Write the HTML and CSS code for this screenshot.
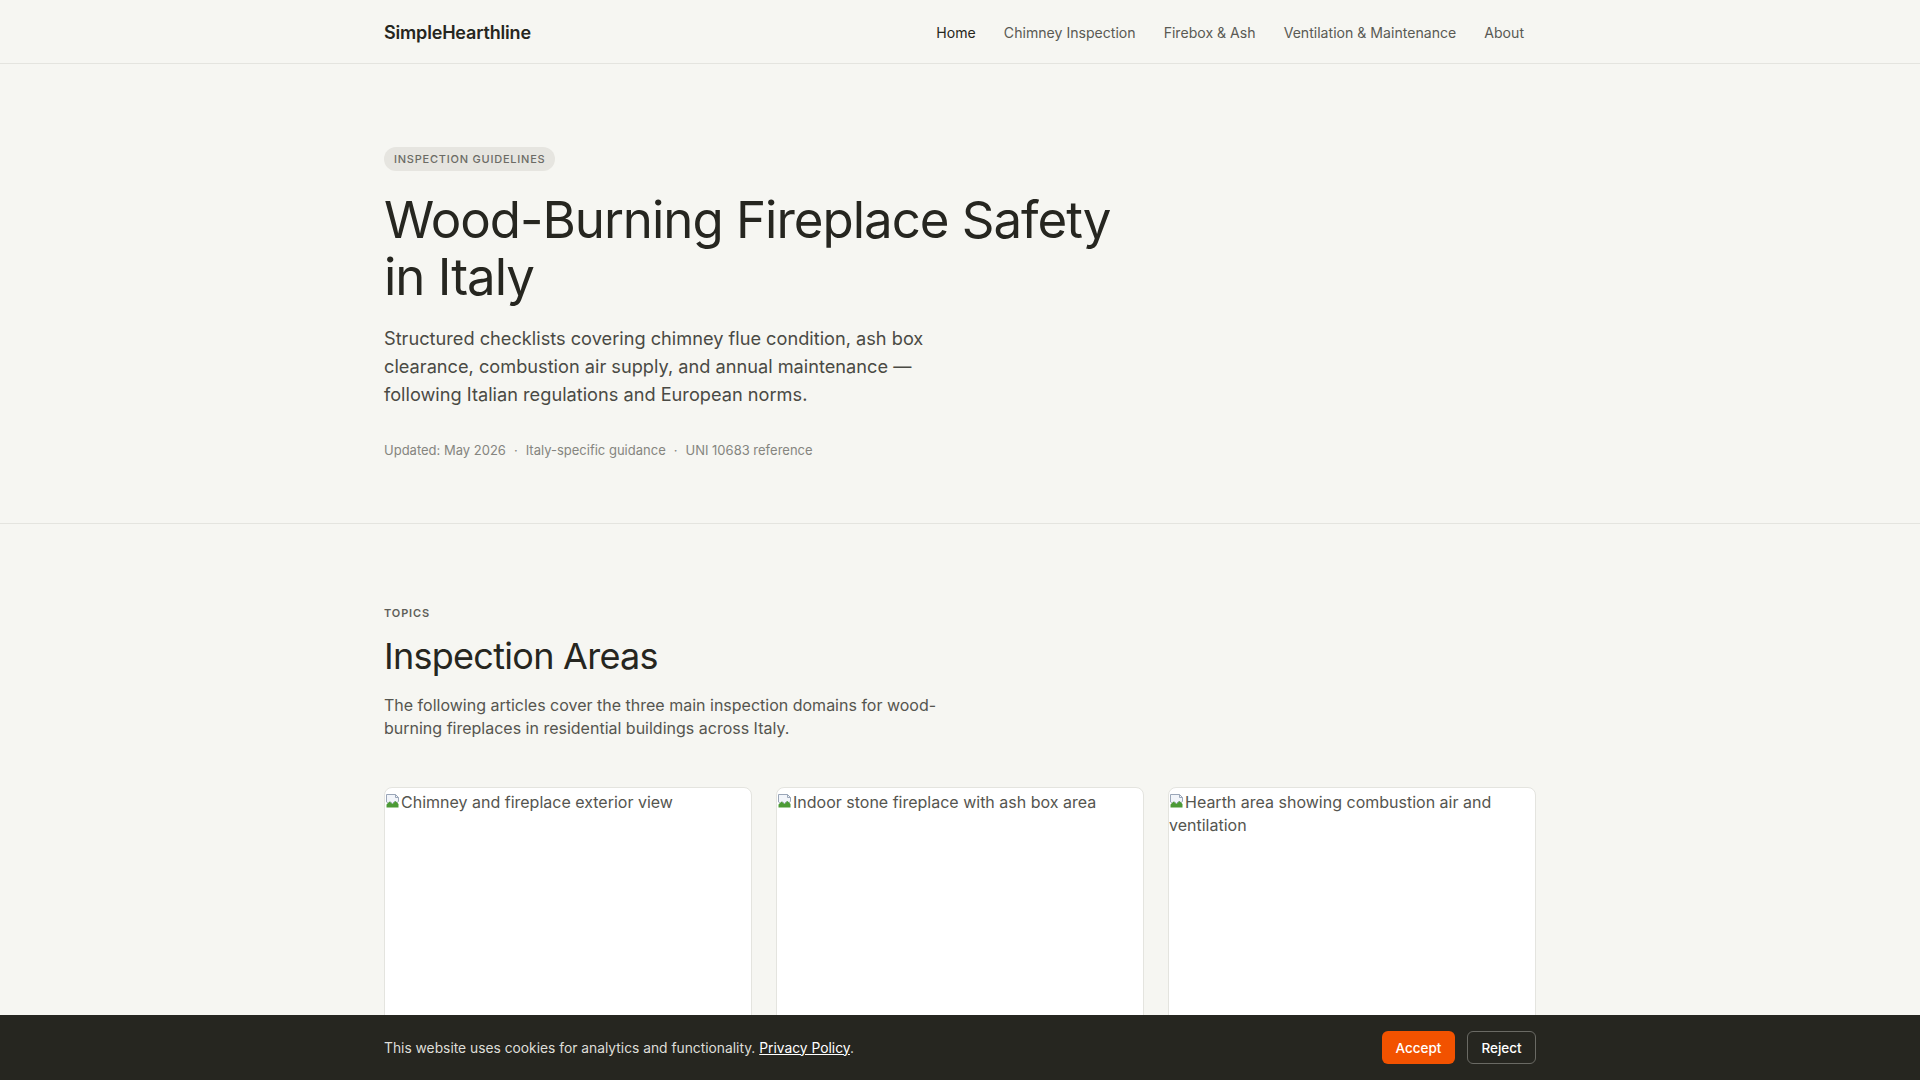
FILE: index.html
```html
<!DOCTYPE html>
<html lang="en">
<head>
  <meta charset="UTF-8">
  <title>SimpleHearthline — Wood-Burning Fireplace Safety in Italy</title>
  <link rel="stylesheet" href="styles.css">
</head>
<body>

  <header class="site-header">
    <div class="container header-inner">
      <a class="logo" href="#">SimpleHearthline</a>
      <nav class="nav">
        <a href="#" class="active">Home</a>
        <a href="#">Chimney Inspection</a>
        <a href="#">Firebox &amp; Ash</a>
        <a href="#">Ventilation &amp; Maintenance</a>
        <a href="#">About</a>
      </nav>
    </div>
  </header>

  <section class="hero">
    <div class="container">
      <span class="badge">Inspection Guidelines</span>
      <h1>Wood-Burning Fireplace Safety in Italy</h1>
      <p class="lead">Structured checklists covering chimney flue condition, ash box clearance, combustion air supply, and annual maintenance — following Italian regulations and European norms.</p>
      <div class="meta">
        <span>Updated: May 2026</span>
        <span class="dot">·</span>
        <span>Italy-specific guidance</span>
        <span class="dot">·</span>
        <span>UNI 10683 reference</span>
      </div>
    </div>
  </section>

  <section class="topics">
    <div class="container">
      <div class="eyebrow">Topics</div>
      <h2>Inspection Areas</h2>
      <p class="intro">The following articles cover the three main inspection domains for wood-burning fireplaces in residential buildings across Italy.</p>

      <div class="cards">
        <article class="card">
          <div class="card-img">
            <svg class="broken" viewBox="0 0 16 16" width="16" height="16"><path d="M1.5 1.5h9l3 3v4l-2 1.5-2-1.5-2 2-2-1.5-2 1.5-2-1.5z" fill="#f2f5fa" stroke="#9aa6b8"/><path d="M10.5 1.5v3h3" fill="none" stroke="#9aa6b8"/><path d="M1.5 14.5v-3l3-3 3 2.5 3-3 3 3v3.5z" fill="#4c9a36"/></svg>Chimney and fireplace exterior view
          </div>
        </article>
        <article class="card">
          <div class="card-img">
            <svg class="broken" viewBox="0 0 16 16" width="16" height="16"><path d="M1.5 1.5h9l3 3v4l-2 1.5-2-1.5-2 2-2-1.5-2 1.5-2-1.5z" fill="#f2f5fa" stroke="#9aa6b8"/><path d="M10.5 1.5v3h3" fill="none" stroke="#9aa6b8"/><path d="M1.5 14.5v-3l3-3 3 2.5 3-3 3 3v3.5z" fill="#4c9a36"/></svg>Indoor stone fireplace with ash box area
          </div>
        </article>
        <article class="card">
          <div class="card-img">
            <svg class="broken" viewBox="0 0 16 16" width="16" height="16"><path d="M1.5 1.5h9l3 3v4l-2 1.5-2-1.5-2 2-2-1.5-2 1.5-2-1.5z" fill="#f2f5fa" stroke="#9aa6b8"/><path d="M10.5 1.5v3h3" fill="none" stroke="#9aa6b8"/><path d="M1.5 14.5v-3l3-3 3 2.5 3-3 3 3v3.5z" fill="#4c9a36"/></svg>Hearth area showing combustion air and ventilation
          </div>
        </article>
      </div>
    </div>
  </section>

  <div class="cookie-bar">
    <div class="container cookie-inner">
      <p>This website uses cookies for analytics and functionality. <a href="#">Privacy Policy</a>.</p>
      <div class="cookie-actions">
        <button class="btn-accept">Accept</button>
        <button class="btn-reject">Reject</button>
      </div>
    </div>
  </div>

</body>
</html>
```
FILE: styles.css
```css
* {
  box-sizing: border-box;
}
body {
  margin: 0;
  font-family: Inter, "Noto Sans", Arial, sans-serif;
  background: #f6f6f2;
  color: #262620;
}
a {
  color: inherit;
  text-decoration: none;
}
.container {
  width: 1152px;
  margin: 0 auto;
}

/* header */
.site-header {
  border-bottom: 1px solid #e4e4df;
}
.header-inner {
  height: 63px;
  display: flex;
  align-items: center;
  justify-content: space-between;
}
.logo {
  font-size: 18px;
  font-weight: 600;
  letter-spacing: -0.01em;
  color: #262620;
  margin-top: 2px;
}
.nav {
  display: flex;
  gap: 28px;
  padding-right: 12px;
  margin-top: 2px;
}
.nav a {
  font-size: 14.1px;
  color: #5a5a54;
}
.nav a.active {
  color: #262620;
}

/* hero */
.hero {
  padding: 83px 0 65px;
  border-bottom: 1px solid #e4e4df;
}
.badge {
  display: inline-block;
  background: #e6e5e0;
  color: #6b6b65;
  font-size: 11px;
  font-weight: 500;
  letter-spacing: 0.07em;
  text-transform: uppercase;
  padding: 6px 10px;
  border-radius: 12px;
  line-height: 12px;
}
.hero h1 {
  margin: 20px 0 0;
  font-size: 51px;
  font-weight: 400;
  line-height: 57px;
  letter-spacing: -0.02em;
  max-width: 768px;
  color: #262620;
}
.lead {
  margin: 19px 0 0;
  font-size: 18.2px;
  line-height: 28px;
  color: #4a4a44;
  max-width: 590px;
}
.meta {
  margin-top: 34px;
  font-size: 13px;
  color: #85857f;
  display: flex;
  gap: 8px;
}

/* topics */
.topics {
  padding: 82px 0 0;
}
.eyebrow {
  font-size: 11px;
  font-weight: 600;
  letter-spacing: 0.08em;
  text-transform: uppercase;
  color: #5f5f59;
}
.topics h2 {
  margin: 14px 0 0;
  font-size: 36px;
  font-weight: 400;
  letter-spacing: -0.02em;
  line-height: 44px;
}
.intro {
  margin: 16px 0 0;
  font-size: 16px;
  line-height: 23px;
  color: #55554f;
  max-width: 580px;
}
.cards {
  margin-top: 47px;
  display: grid;
  grid-template-columns: repeat(3, 1fr);
  gap: 24px;
}
.card {
  background: #fff;
  border: 1px solid #e4e4df;
  border-radius: 8px;
  overflow: hidden;
  height: 320px;
}
.card-img {
  height: 220px;
  padding-top: 3px;
  font-size: 16px;
  line-height: 23px;
  color: #55554f;
}
.broken {
  vertical-align: -1px;
}

/* cookie bar */
.cookie-bar {
  position: fixed;
  left: 0;
  right: 0;
  bottom: 0;
  height: 65px;
  background: #262620;
  color: #deded8;
}
.cookie-inner {
  height: 100%;
  display: flex;
  align-items: center;
  justify-content: space-between;
}
.cookie-inner p {
  margin: 0;
  font-size: 13.8px;
}
.cookie-inner a {
  color: #fff;
  text-decoration: underline;
}
.cookie-actions {
  display: flex;
  gap: 12px;
}
.cookie-actions button {
  font-family: inherit;
  font-size: 13.5px;
  font-weight: 500;
  height: 33px;
  border-radius: 6px;
  cursor: pointer;
  color: #fff;
}
.btn-accept {
  background: #f25200;
  border: none;
  width: 73px;
}
.btn-reject {
  background: transparent;
  border: 1px solid #6a6a64;
  width: 69px;
}
```
